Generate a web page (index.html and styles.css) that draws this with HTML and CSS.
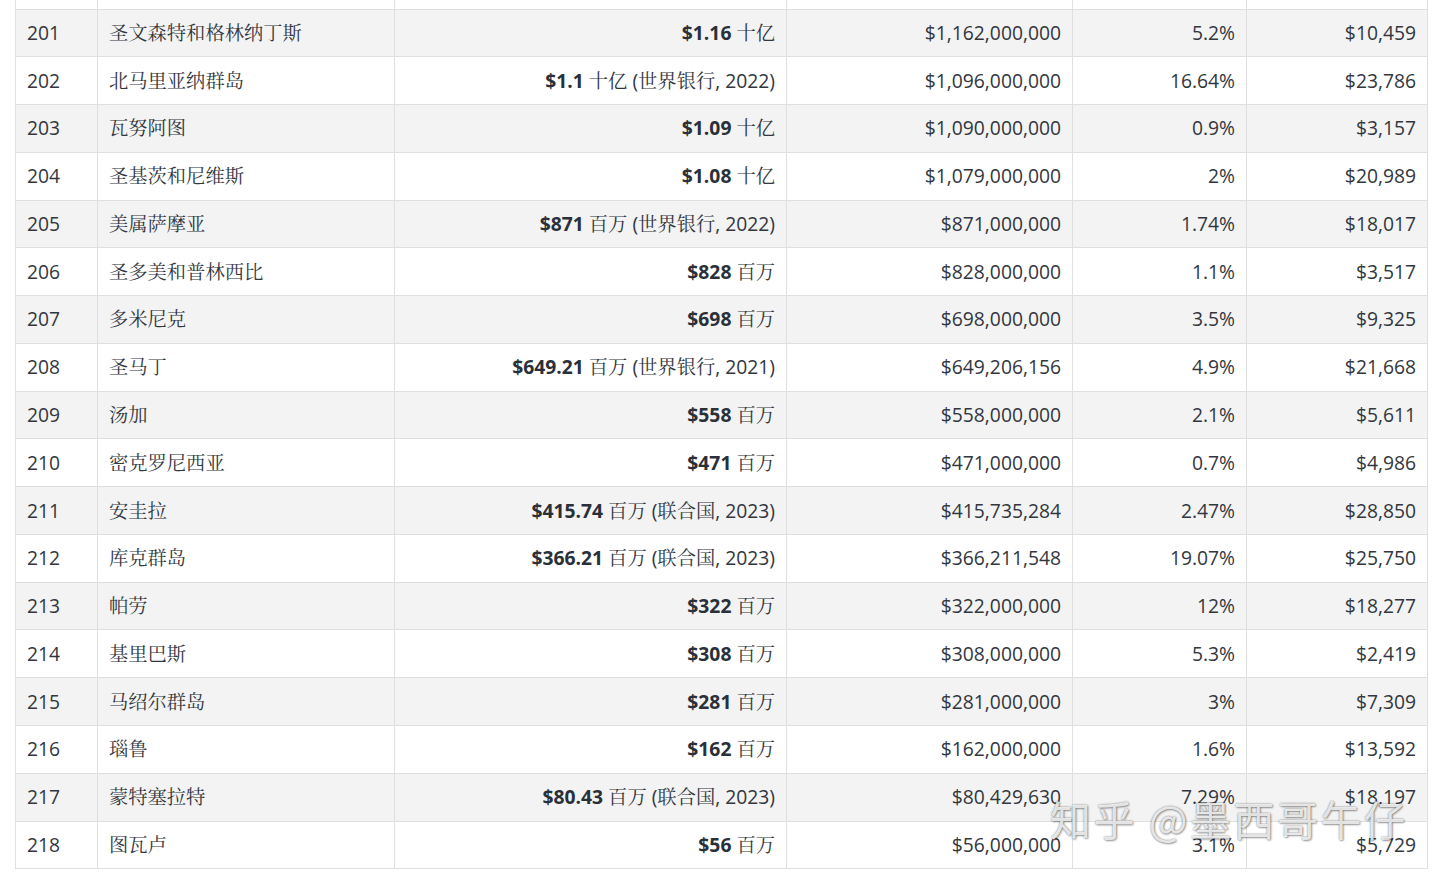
FILE: index.html
```html
<!DOCTYPE html>
<html lang="zh">
<head>
<meta charset="utf-8">
<title>GDP</title>
<link rel="stylesheet" href="styles.css">
</head>
<body>
<div class="page">
<table class="gdp">
<colgroup>
<col class="c-rank"><col class="c-name"><col class="c-text"><col class="c-num"><col class="c-pct"><col class="c-cap">
</colgroup>
<tbody>
<tr class="cut"><td></td><td></td><td></td><td></td><td></td><td></td></tr>
<tr><td>201</td><td class="name">圣文森特和格林纳丁斯</td><td class="r"><b>$1.16</b> 十亿</td><td class="r">$1,162,000,000</td><td class="r">5.2%</td><td class="r">$10,459</td></tr>
<tr><td>202</td><td class="name">北马里亚纳群岛</td><td class="r"><b>$1.1</b> 十亿 (世界银行, 2022)</td><td class="r">$1,096,000,000</td><td class="r">16.64%</td><td class="r">$23,786</td></tr>
<tr><td>203</td><td class="name">瓦努阿图</td><td class="r"><b>$1.09</b> 十亿</td><td class="r">$1,090,000,000</td><td class="r">0.9%</td><td class="r">$3,157</td></tr>
<tr><td>204</td><td class="name">圣基茨和尼维斯</td><td class="r"><b>$1.08</b> 十亿</td><td class="r">$1,079,000,000</td><td class="r">2%</td><td class="r">$20,989</td></tr>
<tr><td>205</td><td class="name">美属萨摩亚</td><td class="r"><b>$871</b> 百万 (世界银行, 2022)</td><td class="r">$871,000,000</td><td class="r">1.74%</td><td class="r">$18,017</td></tr>
<tr><td>206</td><td class="name">圣多美和普林西比</td><td class="r"><b>$828</b> 百万</td><td class="r">$828,000,000</td><td class="r">1.1%</td><td class="r">$3,517</td></tr>
<tr><td>207</td><td class="name">多米尼克</td><td class="r"><b>$698</b> 百万</td><td class="r">$698,000,000</td><td class="r">3.5%</td><td class="r">$9,325</td></tr>
<tr><td>208</td><td class="name">圣马丁</td><td class="r"><b>$649.21</b> 百万 (世界银行, 2021)</td><td class="r">$649,206,156</td><td class="r">4.9%</td><td class="r">$21,668</td></tr>
<tr><td>209</td><td class="name">汤加</td><td class="r"><b>$558</b> 百万</td><td class="r">$558,000,000</td><td class="r">2.1%</td><td class="r">$5,611</td></tr>
<tr><td>210</td><td class="name">密克罗尼西亚</td><td class="r"><b>$471</b> 百万</td><td class="r">$471,000,000</td><td class="r">0.7%</td><td class="r">$4,986</td></tr>
<tr><td>211</td><td class="name">安圭拉</td><td class="r"><b>$415.74</b> 百万 (联合国, 2023)</td><td class="r">$415,735,284</td><td class="r">2.47%</td><td class="r">$28,850</td></tr>
<tr><td>212</td><td class="name">库克群岛</td><td class="r"><b>$366.21</b> 百万 (联合国, 2023)</td><td class="r">$366,211,548</td><td class="r">19.07%</td><td class="r">$25,750</td></tr>
<tr><td>213</td><td class="name">帕劳</td><td class="r"><b>$322</b> 百万</td><td class="r">$322,000,000</td><td class="r">12%</td><td class="r">$18,277</td></tr>
<tr><td>214</td><td class="name">基里巴斯</td><td class="r"><b>$308</b> 百万</td><td class="r">$308,000,000</td><td class="r">5.3%</td><td class="r">$2,419</td></tr>
<tr><td>215</td><td class="name">马绍尔群岛</td><td class="r"><b>$281</b> 百万</td><td class="r">$281,000,000</td><td class="r">3%</td><td class="r">$7,309</td></tr>
<tr><td>216</td><td class="name">瑙鲁</td><td class="r"><b>$162</b> 百万</td><td class="r">$162,000,000</td><td class="r">1.6%</td><td class="r">$13,592</td></tr>
<tr><td>217</td><td class="name">蒙特塞拉特</td><td class="r"><b>$80.43</b> 百万 (联合国, 2023)</td><td class="r">$80,429,630</td><td class="r">7.29%</td><td class="r">$18,197</td></tr>
<tr><td>218</td><td class="name">图瓦卢</td><td class="r"><b>$56</b> 百万</td><td class="r">$56,000,000</td><td class="r">3.1%</td><td class="r">$5,729</td></tr>
</tbody>
</table>
<div class="watermark">知乎 @墨西哥午仔</div>
</div>
</body>
</html>
```

FILE: styles.css
```css
html, body {
  margin: 0;
  padding: 0;
  background: #ffffff;
}

.page {
  position: relative;
  width: 1440px;
  height: 879px;
  overflow: hidden;
  padding: 0 0 0 15px;
  box-sizing: border-box;
  font-family: "Open Sans", "Noto Serif CJK SC", "Noto Sans CJK SC", sans-serif;
  font-size: 19.3px;
  color: #32373e;
}

.gdp {
  border-collapse: collapse;
  table-layout: fixed;
  width: 1412px;
}

.c-rank { width: 82px; }
.c-name { width: 297px; }
.c-text { width: 392px; }
.c-num { width: 286px; }
.c-pct { width: 174px; }
.c-cap { width: 181px; }

.gdp td {
  border: 1px solid #dfdfdf;
  padding: 0 11px 0 11px;
  height: 47.78px;
  line-height: 24px;
  vertical-align: middle;
  white-space: nowrap;
  box-sizing: border-box;
}

.gdp tr:nth-child(even) td {
  background: #f3f3f3;
}

.gdp tr.cut td {
  height: 9px;
  border-top: none;
  padding: 0;
}

.gdp td.r {
  text-align: right;
}

.gdp b {
  font-weight: 700;
  color: #2a3039;
}

.watermark {
  position: absolute;
  left: 1050px;
  top: 792px;
  font-family: "Noto Sans CJK SC", sans-serif;
  font-size: 41px;
  line-height: 52px;
  color: rgba(255, 255, 255, 0.82);
  letter-spacing: 2.5px;
  text-shadow: 0 0 2px rgba(0, 0, 0, 0.5), 1px 1px 2px rgba(0, 0, 0, 0.3);
  white-space: nowrap;
}
```
